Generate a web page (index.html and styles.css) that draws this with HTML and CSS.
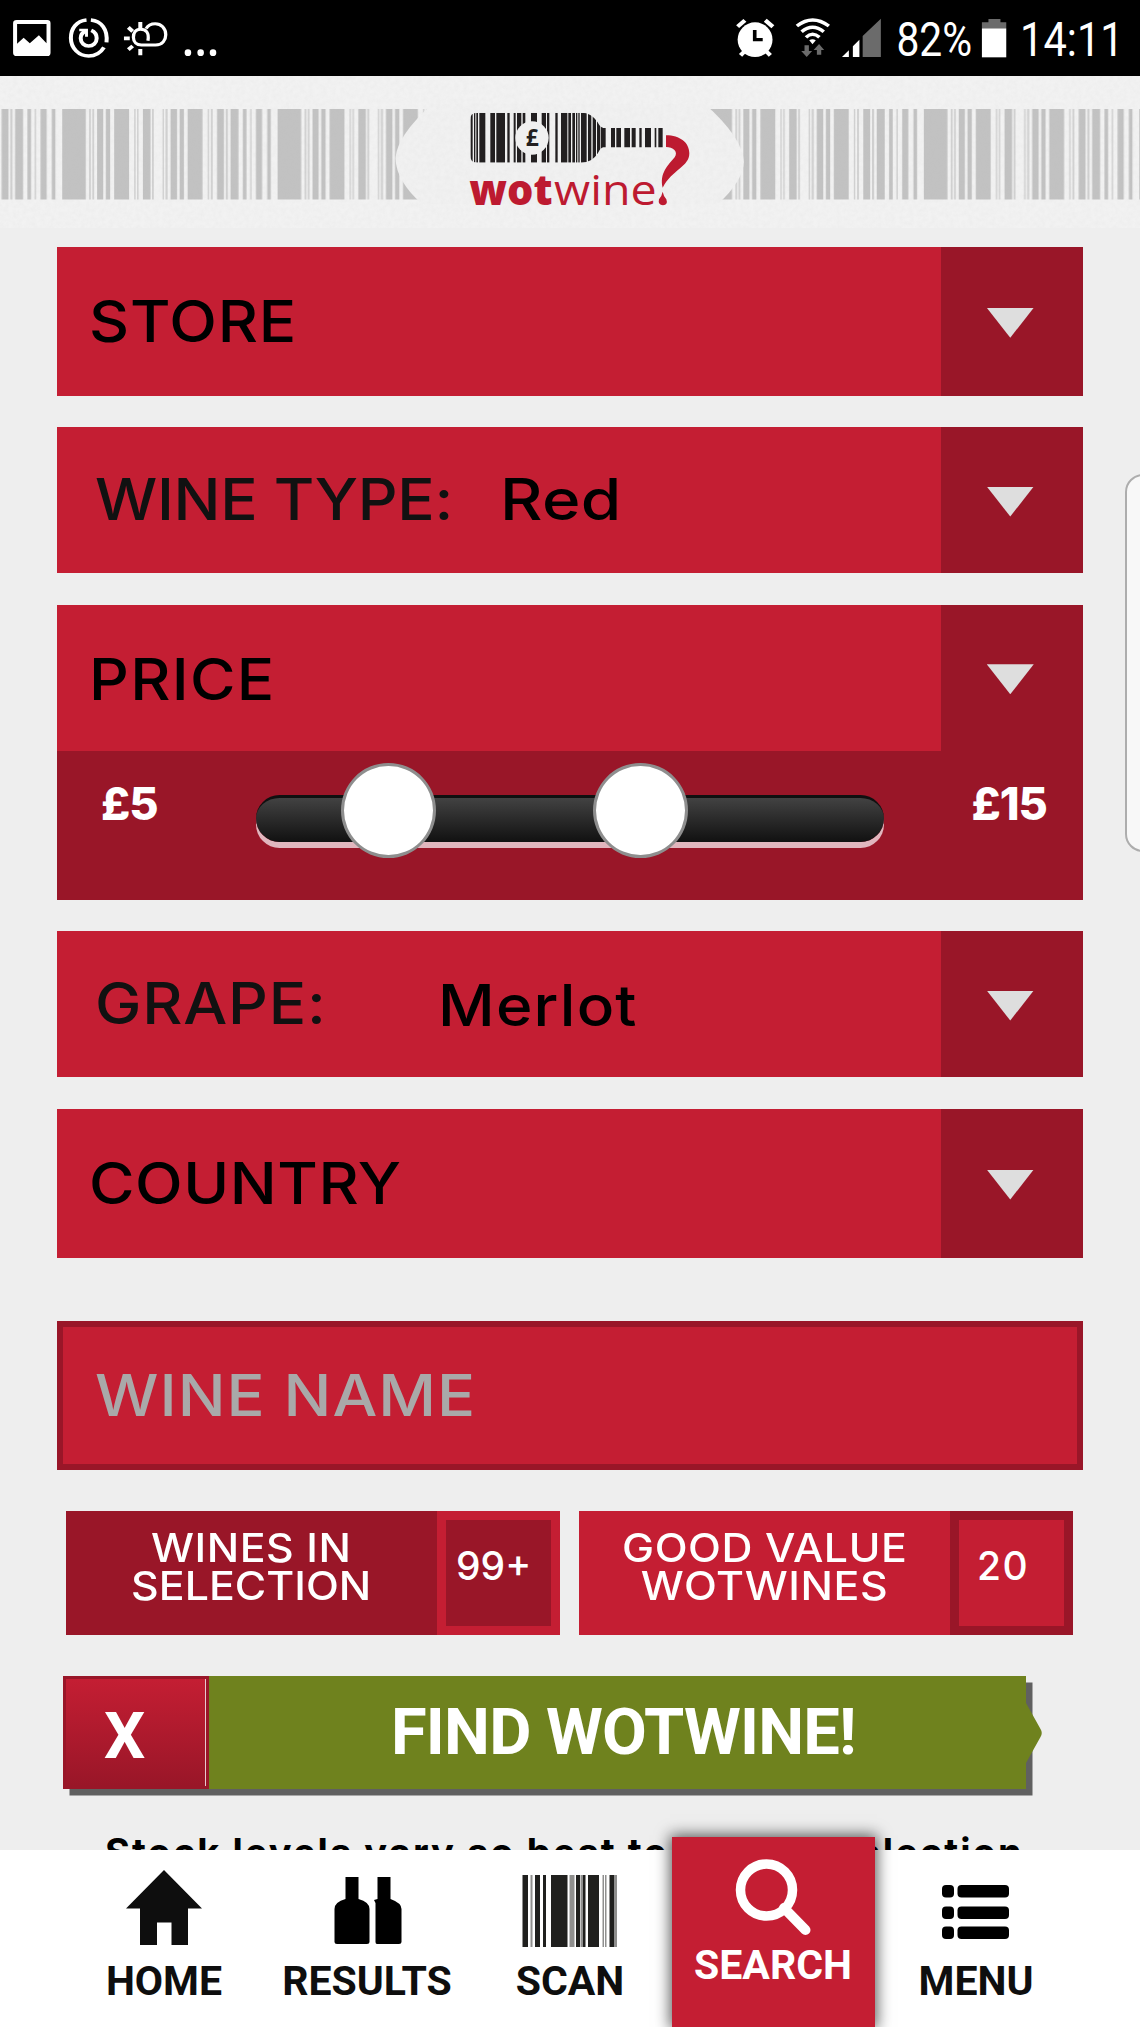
FILE: index.html
```html
<!DOCTYPE html>
<html lang="en">
<head>
<meta charset="utf-8">
<title>wotwine? – Search</title>
<link rel="stylesheet" href="styles.css">
</head>
<body>
<div class="screen">
  <div class="statusbar">
    <svg class="status-left" viewBox="0 0 630 228" preserveAspectRatio="none">
      <path fill="#fff" fill-rule="evenodd" d="M46 60H130Q139 60 139 70V158Q139 168 130 168H46Q36 168 36 158V70Q36 60 46 60ZM47 72V131L65 113L82 130L107 106L128 130V72Z"/>
      <g fill="none" stroke="#fff" stroke-width="11">
        <path d="M238 60C210 63 195 86 195 114C195 145 217 168 244 168C263 168 277 158 286 142"/>
        <path d="M250 60C279 63 297 89 293 127"/>
        <path d="M236 93C225 98 222 107 222 115C222 129 232 138 244 138C256 138 266 129 266 115C266 104 260 95 251 91"/>
        <path stroke-width="8" d="M218 90H238V110"/>
        <path stroke-width="9" d="M407 122C411 98 402 88 386 88C373 88 367 99 367 112C367 126 376 135 389 135H428C447 135 456 120 456 104C456 84 443 71 427 71C415 71 407 76 402 86"/>
        <path d="M386 66V84M386 147V166M341 115H357M353 82L365 94M353 149L365 138"/>
      </g>
      <g fill="#fff"><ellipse cx="517" cy="158" rx="9" ry="10"/><ellipse cx="552" cy="158" rx="9" ry="10"/><ellipse cx="586" cy="158" rx="9" ry="10"/></g>
    </svg>
    <svg class="status-right" viewBox="450 0 1118 228" preserveAspectRatio="none">
      <g stroke="#fff" stroke-width="12" fill="none"><path d="M460 80L480 61M536 61L557 80M468 166L480 153M550 166L538 153"/></g>
      <ellipse cx="508" cy="119" rx="48" ry="52" fill="#fff"/>
      <path d="M507 90V119H529" fill="none" stroke="#000" stroke-width="10"/>
      <g fill="none" stroke="#fff" stroke-width="10">
        <path d="M623 78Q666 42 711 78M636 95Q666 68 697 95M648 112Q666 94 685 112"/>
      </g>
      <path fill="#fff" d="M657 121Q666 114 675 121L666 133Z"/>
      <path fill="#6b6b6b" d="M644 136H656V153H665L650 171L635 153H644ZM678 164V150H669L684 132L698 150H690V164Z"/>
      <path fill="#fff" d="M747 171L766 151V171ZM777 171V139L795 119V171Z"/>
      <path fill="#6b6b6b" d="M804 171V108L854 56V171ZM1150 57H1183V67H1199V85H1132V67H1150Z"/>
      <path fill="#fff" d="M1132 85H1199V172H1132Z"/>
      <text class="status-text" x="897" y="168" textLength="208" lengthAdjust="spacingAndGlyphs">82%</text>
      <text class="status-text" x="1237" y="168" textLength="285" lengthAdjust="spacingAndGlyphs">14:11</text>
    </svg>
  </div>

  <header class="brand">
    <svg class="brand-art" viewBox="0 0 1140 152">
      <defs>
        <pattern id="bars" width="592.6" height="300" patternUnits="userSpaceOnUse" patternTransform="translate(62.2 0) scale(.3635 1)">
          <path fill="#c2c2c2" d="M0 0h65v300h-65zM96 0h17v300h-17zM120 0h12v300h-12zM143 0h41v300h-41zM222 0h21v300h-21zM298 0h18v300h-18zM323 0h12v300h-12zM345 0h41v300h-41zM426 0h19v300h-19zM463 0h22v300h-22zM497 0h10v300h-10zM533 0h17v300h-17zM564 0h10v300h-10z"/>
          <path fill="#d0d0d0" d="M74 0h5v300h-5zM83 0h5v300h-5zM198 0h4v300h-4zM206 0h4v300h-4zM247 0h5v300h-5zM276 0h4v300h-4zM284 0h6v300h-6zM400 0h4v300h-4zM409 0h5v300h-5zM450 0h6v300h-6zM517 0h4v300h-4z"/>
        </pattern>
        <filter id="paper" x="0" y="0" width="100%" height="100%">
          <feTurbulence type="fractalNoise" baseFrequency=".22" numOctaves="3" seed="4"/>
          <feColorMatrix values="0 0 0 0 .5  0 0 0 0 .5  0 0 0 0 .5  .35 0 0 0 -.1"/>
        </filter>
        <clipPath id="bottle"><path d="M90 75Q90 53 112 53H425Q455 53 473 82Q480 97 490 99H672V157H490Q482 158 474 174Q456 203 425 203H112Q90 203 90 180Z"/></clipPath>
      </defs>
      <rect x="0" y="33" width="1140" height="90.5" fill="url(#bars)"/>
      <path fill="#f1f1f1" d="M432 28Q397 60 395.5 82Q396 105 422 128H718Q743 105 743.8 86Q743 62 705 28Z"/>
      <rect width="1140" height="152" filter="url(#paper)" opacity=".4"/>
      <svg x="440" y="19" width="280" height="130" viewBox="0 0 840 390">
        <path clip-path="url(#bottle)" fill="#221f20" d="M92 53h6v150h-6zM102 53h4v150h-4zM109 53h5v150h-5zM118 53h18v150h-18zM151 53h14v150h-14zM169 53h26v150h-26zM202 53h7v150h-7zM221 53h6v150h-6zM231 53h13v150h-13zM248 53h8v150h-8zM273 53h18v150h-18zM305 53h13v150h-13zM321 53h7v150h-7zM346 53h7v150h-7zM363 53h19v150h-19zM385 53h8v150h-8zM397 53h8v150h-8zM408 53h4v150h-4zM415 53h4v150h-4zM423 53h17v150h-17zM444 53h10v150h-10zM458 53h10v150h-10zM471 53h9v150h-9zM482 53h15v150h-15zM513 53h12v150h-12zM529 53h14v150h-14zM553 53h17v150h-17zM575 53h12v150h-12zM598 53h7v150h-7zM615 53h18v150h-18zM644 53h5v150h-5zM655 53h13v150h-13z"/>
        <circle cx="276" cy="129" r="50" fill="#f0f0f0"/>
        <text class="logo-pound" x="257" y="153">£</text>
        <text class="logo-bold" x="88" y="329" textLength="250" lengthAdjust="spacingAndGlyphs">wot</text>
        <text class="logo-light" x="342" y="329" textLength="308" lengthAdjust="spacingAndGlyphs">wine</text>
        <g fill="#bd1a30">
          <path d="M678 121C720 121 748 143 748 175C748 216 696 224 668 278C658 235 684 211 704 187C716 169 699 156 678 156Z"/>
          <path d="M668 290Q671 305 679 313Q685 330 669 331Q653 330 657 313Q665 305 668 290Z"/>
        </g>
      </svg>
    </svg>
  </header>

  <main class="form">
    <div class="field field-store">
      <div class="field-body"><span class="label w-store">STORE</span></div>
      <div class="field-arrow"><i class="caret"></i></div>
    </div>
    <div class="field field-type">
      <div class="field-body inset"><span class="label soft w-type">WINE TYPE:</span><span class="value w-red">Red</span></div>
      <div class="field-arrow"><i class="caret"></i></div>
    </div>
    <div class="price">
      <div class="field field-price">
        <div class="field-body"><span class="label w-price">PRICE</span></div>
        <div class="field-arrow"><i class="caret"></i></div>
      </div>
      <div class="range">
        <span class="range-min">£5</span>
        <div class="track"><i class="knob knob-low"></i><i class="knob knob-high"></i></div>
        <span class="range-max">£15</span>
      </div>
    </div>
    <div class="field field-grape">
      <div class="field-body inset"><span class="label soft w-grape">GRAPE:</span><span class="value w-merlot">Merlot</span></div>
      <div class="field-arrow"><i class="caret"></i></div>
    </div>
    <div class="field field-country">
      <div class="field-body"><span class="label w-country">COUNTRY</span></div>
      <div class="field-arrow"><i class="caret"></i></div>
    </div>
    <div class="name-input"><span class="placeholder">WINE NAME</span></div>
    <div class="stats">
      <div class="stat stat-dark"><div class="stat-label"><span>WINES IN</span><span class="s-selection">SELECTION</span></div><div class="stat-count">99+</div></div>
      <div class="stat stat-light"><div class="stat-label"><span>GOOD VALUE</span><span>WOTWINES</span></div><div class="stat-count">20</div></div>
    </div>
    <div class="find">
      <div class="clear">X</div>
      <div class="find-button"><span>FIND WOTWINE!</span>
        <svg class="find-tip" viewBox="0 0 16 60"><path fill="#6f821e" d="M0 0L14.500 26Q17 30 14.500 34L0 60Z"/></svg>
      </div>
    </div>
    <p class="note">Stock levels vary so best to make a selection</p>
  </main>

  <nav class="tabs">
    <div class="tab"><svg viewBox="0 0 110 80"><path fill="#0e0e0e" d="M55 4L93 42.500H79V79H62.500V56.500H48V79H31V42.500H17Z"/></svg><span>HOME</span></div>
    <div class="tab"><svg viewBox="0 0 110 80"><path d="M33.500 11H46.500V33Q57.500 36 57.500 43V76Q57.500 78 55 78H25Q22.500 78 22.500 76V43Q22.500 36 33.500 33ZM65.500 11H78.500V33Q89.500 37 89.500 43V76Q89.500 78 87 78H65Q63.500 78 63.500 76V37L62 34L65.500 33Z"/></svg><span>RESULTS</span></div>
    <div class="tab"><svg viewBox="0 0 110 80"><g fill="#20201e"><path d="M7.500 9h5.500v72h-5.500zM20 9h5v72h-5zM28 9h3v72h-3zM36 9h16.500v72h-16.500zM61 9h4v72h-4zM67.500 9h3v72h-3zM73 9h11v72h-11zM94.500 9h4.500v72h-4.500z"/><path opacity=".5" d="M15.500 9h2v72h-2zM54.500 9h5v72h-5zM65.500 9h1.500v72h-1.500zM87.500 9h1.500v72h-1.500zM90 9h1.500v72h-1.500zM99 9h3v72h-3z"/></g></svg><span>SCAN</span></div>
    <div class="tab active"><svg viewBox="0 0 110 80"><g fill="none" stroke="#fff"><circle cx="48.500" cy="45" r="26" stroke-width="9.500"/><path d="M66 63L87.500 85" stroke-width="10" stroke-linecap="round"/></g></svg><span>SEARCH</span></div>
    <div class="tab"><svg viewBox="0 0 110 80"><rect x="21" y="19" width="12" height="12.500" rx="4"/><rect x="36.500" y="19" width="51.500" height="12.500" rx="4"/><rect x="21" y="40.500" width="12" height="12.500" rx="4"/><rect x="36.500" y="40.500" width="51.500" height="12.500" rx="4"/><rect x="21" y="60.500" width="12" height="12.500" rx="4"/><rect x="36.500" y="60.500" width="51.500" height="12.500" rx="4"/></svg><span>MENU</span></div>
  </nav>
  <div class="edge-handle"></div>
</div>
</body>
</html>
```
FILE: styles.css
```css
* { box-sizing: border-box; }
body { margin: 0; background: #eee; font-family: Inter, "Liberation Sans", sans-serif; }
.screen { position: relative; width: 1140px; height: 2027px; overflow: hidden; display: flex; flex-direction: column; }
svg { display: block; overflow: visible; }

.statusbar { height: 76px; flex: none; background: #000; display: flex; justify-content: space-between; }
.status-left { width: 229px; height: 76px; }
.status-right { width: 406.400px; height: 76px; }
.status-text { font: 400 144px Roboto, sans-serif; fill: #fff; }

.brand { height: 152px; flex: none; background: #f2f2f2; overflow: hidden; }
.brand-art { width: 1140px; height: 152px; }
.logo-pound { font: 700 68px "Open Sans", sans-serif; fill: #221f20; }
.logo-bold { font: 800 125px "Open Sans", sans-serif; fill: #bd1a30; }
.logo-light { font: 400 125px "Open Sans", sans-serif; fill: #bd1a30; }

.form { flex: 1; min-height: 0; overflow: hidden; padding: 19px 57px 0; }
.field { display: grid; grid-template-columns: 883.500px 142.500px; }
.field-body { background: #c41e33; padding: 46px 0 0 32px; display: flex; align-items: flex-start; font-size: 57px; line-height: 57px; font-weight: 540; white-space: nowrap; }
.field-body.inset { padding: 44px 0 0 38px; }
.label, .value, .placeholder { display: inline-block; transform: scaleX(1.09); transform-origin: left; letter-spacing: .500px; }
.field-arrow { background: #991628; display: flex; align-items: center; justify-content: center; padding: 3px 3px 0 0; }
.caret { width: 47px; height: 30px; background: #dedede; clip-path: polygon(0 0, 100% 0, 50% 100%); }
.field-store { height: 148.500px; margin-bottom: 31.500px; }
.field-type { height: 146px; margin-bottom: 32px; }
.price { height: 294.500px; margin-bottom: 31.500px; background: #991628; }
.field-price { height: 145.700px; }
.field-grape { height: 146px; margin-bottom: 31.500px; }
.field-country { height: 149px; margin-bottom: 63px; }
.soft { color: #111; }
.w-store { letter-spacing: .700px; }
.w-price { letter-spacing: 1.200px; }
.w-type { width: 405px; letter-spacing: -.300px; }
.w-red { transform: scaleX(1.15); letter-spacing: .300px; }
.w-grape { width: 343px; letter-spacing: .700px; }
.w-merlot { margin-top: 2px; letter-spacing: 1.100px; }

.range { display: flex; height: 149px; color: #fff; font-size: 45px; line-height: 45px; font-weight: 800; }
.range-min { width: 199px; padding: 30px 0 0 44px; letter-spacing: -1px; }
.track { position: relative; flex: none; width: 627.500px; height: 46.500px; margin-top: 44.500px; border-radius: 24px; background: linear-gradient(#424242, #111); border-top: 3px solid #101010; box-shadow: 0 6px 0 #e1b6be; }
.range-max { padding: 30px 0 0 88px; letter-spacing: -1px; }
.knob { position: absolute; top: -35px; width: 94.500px; height: 95px; border-radius: 50%; background: #fff; border: 3px solid #8e8e8e; }
.knob-low { left: 85px; }
.knob-high { left: 337px; }

.name-input { height: 149px; border: 6px solid #991628; background: #c41e33; padding: 40px 0 0 32px; font-size: 57px; line-height: 57px; font-weight: 540; color: #a9a9a9; }
.placeholder { transform: scaleX(1.11); letter-spacing: .900px; }

.stats { display: flex; gap: 19px; margin: 41px 9px 0; }
.stat { width: 494px; height: 124px; display: grid; grid-template-columns: 371px 123px; color: #fff; font-size: 39px; line-height: 38px; font-weight: 540; }
.stat-label { display: flex; flex-direction: column; align-items: center; padding-top: 18px; letter-spacing: .500px; }
.stat-label span { transform: scaleX(1.1); }
.stat-label .s-selection { letter-spacing: 0; }
.stat-count { border: 9.500px solid; padding: 27.500px 0 0 10px; }
.stat-dark { background: #991628; }
.stat-dark .stat-count { border-color: #c41e33; }
.stat-light { background: #c41e33; }
.stat-light .stat-count { border-color: #991628; padding-left: 18px; letter-spacing: 1.500px; }

.find { display: flex; width: 962.500px; height: 113.500px; margin: 41px 0 0 6px; box-shadow: 6.500px 6.500px 0 #606060; font-family: Roboto, sans-serif; font-weight: 700; color: #fff; font-size: 65px; line-height: 65px; }
.clear { width: 145.500px; border: 3px solid #991628; background: linear-gradient(90deg, transparent calc(100% - 1px), #e9c9cd 0), linear-gradient(#c41e33, #991628); padding: 25px 0 0 38px; }
.find-button { position: relative; flex: 1; background: #6f821e; padding: 24.500px 0 0 182.500px; letter-spacing: -.800px; white-space: nowrap; }
.find-tip { position: absolute; left: 100%; top: 27px; width: 16px; height: 60px; }
.note { margin: 40px 0 0 48px; font-size: 38px; line-height: 46px; font-weight: 700; letter-spacing: 2.050px; white-space: nowrap; }

.tabs { flex: none; height: 177px; background: #fff; display: flex; padding-left: 62.500px; font: 700 41px/41px Roboto, sans-serif; color: #0e0e0e; }
.tab { width: 203px; display: flex; flex-direction: column; align-items: center; }
.tab svg { width: 110px; height: 80px; margin: 16px 0 15px; }
.tab.active { position: relative; height: 190px; margin-top: -13px; background: #c41e33; color: #fff; box-shadow: 0 0 14px 2px rgba(0, 0, 0, .65); }
.tab.active svg { margin: 8px 0 20px; }
.edge-handle { position: absolute; left: 1125px; top: 474px; width: 40px; height: 378px; border: 2px solid #adadad; border-radius: 18px; background: #f8f8f8; }
```
